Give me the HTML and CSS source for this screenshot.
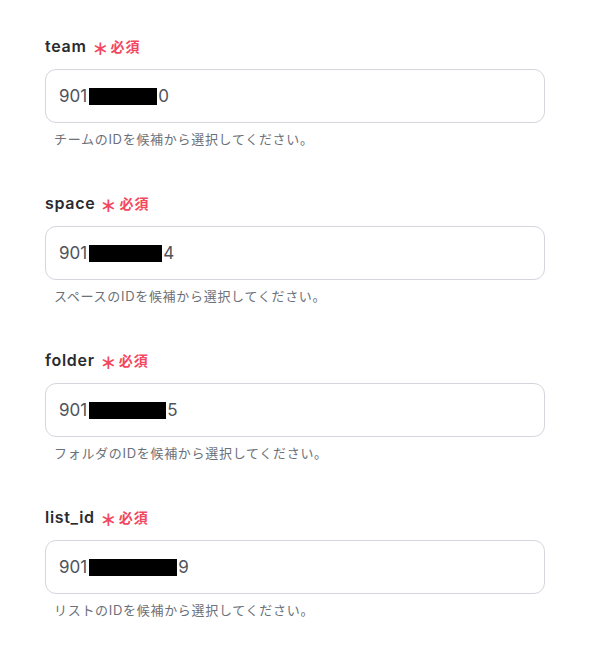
FILE: index.html
```html
<!DOCTYPE html>
<html lang="ja">
<head>
<meta charset="utf-8">
<link rel="stylesheet" href="styles.css">
</head>
<body>
<div class="form">
  <div class="field">
    <div class="label"><span class="name">team</span><span class="req"><span class="ast">∗</span>必須</span></div>
    <div class="input"><span>901</span><span class="mask" style="width:68px"></span><span>0</span></div>
    <div class="help">チームのIDを候補から選択してください。</div>
  </div>
  <div class="field">
    <div class="label"><span class="name">space</span><span class="req"><span class="ast">∗</span>必須</span></div>
    <div class="input"><span>901</span><span class="mask" style="width:73px"></span><span>4</span></div>
    <div class="help">スペースのIDを候補から選択してください。</div>
  </div>
  <div class="field">
    <div class="label"><span class="name">folder</span><span class="req"><span class="ast">∗</span>必須</span></div>
    <div class="input"><span>901</span><span class="mask" style="width:77px"></span><span>5</span></div>
    <div class="help">フォルダのIDを候補から選択してください。</div>
  </div>
  <div class="field">
    <div class="label"><span class="name">list_id</span><span class="req"><span class="ast">∗</span>必須</span></div>
    <div class="input"><span>901</span><span class="mask" style="width:88px"></span><span>9</span></div>
    <div class="help">リストのIDを候補から選択してください。</div>
  </div>
</div>
</body>
</html>
```

FILE: styles.css
```css
* { box-sizing: border-box; }
body {
  margin: 0;
  background: #ffffff;
  font-family: Inter, "Noto Sans CJK JP", sans-serif;
}
.form {
  padding: 36px 0 0 45px;
  display: flex;
  flex-direction: column;
  gap: 45px;
}
.field {
  display: flex;
  flex-direction: column;
  width: 500px;
}
.label {
  display: flex;
  align-items: center;
  height: 20px;
  gap: 5px;
}
.name {
  font-size: 16px;
  font-weight: 600;
  letter-spacing: 0.7px;
  color: #2a2b30;
}
.req {
  display: flex;
  align-items: center;
  color: #f2475d;
  font-size: 14px;
  font-weight: 600;
  letter-spacing: 1px;
  gap: 2px;
}
.ast {
  font-size: 20px;
  font-weight: 400;
  line-height: 20px;
  position: relative;
  top: 2px;
  letter-spacing: 0;
}
.input {
  margin-top: 13px;
  height: 54px;
  border: 1px solid #d3d6dc;
  border-radius: 11px;
  display: flex;
  align-items: center;
  padding-left: 13px;
  font-size: 17px;
  color: #50535b;
}
.mask {
  display: inline-block;
  height: 17px;
  margin: 0 1px 0 2px;
  background: #000;
}
.help {
  margin-top: 7px;
  padding-left: 9px;
  font-size: 13px;
  letter-spacing: 0.7px;
  line-height: 18px;
  color: #6b7079;
}
```
